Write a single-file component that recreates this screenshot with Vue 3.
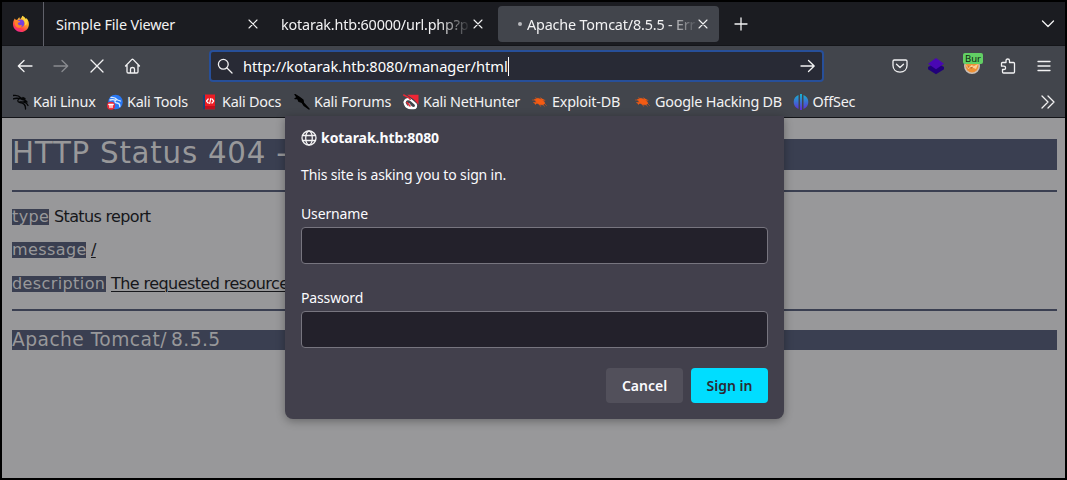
<script setup>
const bookmarks = [
  { name: 'Kali Linux', icon: 'dragon' },
  { name: 'Kali Tools', icon: 'tools' },
  { name: 'Kali Docs', icon: 'docs' },
  { name: 'Kali Forums', icon: 'forums' },
  { name: 'Kali NetHunter', icon: 'hunter' },
  { name: 'Exploit-DB', icon: 'bug' },
  { name: 'Google Hacking DB', icon: 'bug' },
  { name: 'OffSec', icon: 'offsec' }
]
</script>

<template>
  <div class="window">
    <header class="tabs">
      <div class="brand">
        <svg width="18" height="18" viewBox="0 0 18 18">
          <defs>
            <linearGradient id="fox" x1=".85" y1="0" x2=".25" y2="1">
              <stop offset="0" stop-color="#fff44f" /><stop offset=".4" stop-color="#ffa426" /><stop offset=".75" stop-color="#ff3f4b" /><stop offset="1" stop-color="#ef239b" />
            </linearGradient>
          </defs>
          <path d="M2.7 3.4 4 5.1l1.6-.5C6.1 3.2 7 2.5 7.5 2.2c0 1 .2 1.5.8 1.8C9.2 2.8 10 2 10.2.7c2 .9 3 2.1 3.5 3.5.5-.2.5-.7.4-1.200 2 1.600 3 4 2.800 6.700C16.6 14 13.2 17 9 17S1.200 13.800 1 9.500c-.1-2.400.6-4.200 1.700-6.100Z" fill="url(#fox)" />
          <circle cx="8.600" cy="8.300" r="3.700" fill="#7540df" />
          <path d="M3 5.500 7.500 6c1.300.3.8 1.300-.6 1.500-1.500.3-1.200 1.500-.4 2.200 1 .8 2.300.9 3.600.2-.7 2.500-2.500 3.400-4.600 2.700C3 11.800 2 8.500 3 5.500Z" fill="#ff8127" />
          <path d="M10.200 1c1.700 2.300 1.200 3.800 2.100 5.100 1.100 1.600 1 3.200.2 4.600 2.800-.9 3.600-4 1.500-6.700Z" fill="#ffd540" />
        </svg>
      </div>
      <div class="tab first"><span>Simple File Viewer</span><svg class="close" viewBox="0 0 10 10"><path d="m1 1 8 8M9 1 1 9" /></svg></div>
      <div class="tab second"><span class="fade">kotarak.htb:60000/url.php?p</span><svg class="close" viewBox="0 0 10 10"><path d="m1 1 8 8M9 1 1 9" /></svg></div>
      <div class="tab active"><i class="dot"></i><span class="fade">Apache Tomcat/8.5.5 - Err</span><svg class="close" viewBox="0 0 10 10"><path d="m1 1 8 8M9 1 1 9" /></svg></div>
      <svg class="plus" width="14" height="14" viewBox="0 0 14 14"><path d="M7 1v12M1 7h12" /></svg>
      <svg class="chevron" width="14" height="10" viewBox="0 0 14 10"><path d="m1.500 2 5.500 5.500L12.500 2" /></svg>
    </header>

    <div class="toolbar">
      <nav class="navigation">
        <svg viewBox="0 0 18 18"><path d="M16 9H2.500M8 3.500 2.300 9 8 14.500" /></svg>
        <svg class="disabled" viewBox="0 0 18 18"><path d="M2 9h13.500M10 3.500 15.700 9 10 14.500" /></svg>
        <svg viewBox="0 0 18 18"><path d="m3 3 12 12M15 3 3 15" /></svg>
        <svg viewBox="0 0 18 18"><path d="M1.500 9 7.700 2.600q.8-.8 1.600 0L15.500 9M3 8v6.700Q3 16 4.300 16h8.400q1.300 0 1.300-1.300V8M6.500 16v-4q0-1.500 2-1.500t2 1.500v4" /></svg>
      </nav>
      <div class="address">
        <svg width="16" height="16" viewBox="0 0 16 16"><circle cx="6.300" cy="6.300" r="4.900" /><path d="m10 10 5 5" /></svg>
        <span class="url">http://kotarak.htb:8080/manager/html</span><i class="caret"></i>
        <svg class="go" width="16" height="16" viewBox="0 0 16 16"><path d="M1 8h13M8.500 2.500 14.200 8l-5.700 5.500" /></svg>
      </div>
      <div class="actions">
        <svg viewBox="0 0 18 18"><path d="M3.300 3h11.400q1.300 0 1.300 1.300v4.200c0 4-3 6.600-7 6.600S2 12.500 2 8.500V4.300Q2 3 3.300 3ZM5.500 7.200 9 10.500l3.500-3.300" /></svg>
        <svg class="filled" viewBox="0 0 18 18"><path d="m1 10 8-4.500 8 4.500v2.200l-8 5-8-5Z" fill="#21007a" /><path d="m9 1 8 5.700-8 5.600-8-5.600Z" fill="#4907b3" /></svg>
        <div class="extension">
          <svg class="filled" viewBox="0 0 18 18"><circle cx="9" cy="9" r="8" fill="#cabfb6" /><circle cx="9" cy="9" r="6.500" fill="#ef9135" /><path d="m2.500 8 4 2 2-2 2.500 1 4-2-2 5-5-2-2.500 2Z" fill="#ffcf95" /><path d="m4 10 1.500-1 1 2 4-1.500-2 2Z" fill="#a65c29" /></svg>
          <span class="badge">Bur</span>
        </div>
        <svg viewBox="0 0 18 18"><path d="M3.500 5.500H7V3.700C7 2.600 7.600 2 8.700 2s1.800.6 1.800 1.700v1.800h4q1 0 1 1V15q0 1-1 1h-10q-1 0-1-1v-2.500h1.300c1.200 0 1.800-.6 1.800-1.600s-.6-1.700-1.800-1.700H2.500V6.500q0-1 1-1Z" /></svg>
        <svg viewBox="0 0 18 18"><path d="M3 4.500h12M3 9h12M3 13.500h12" /></svg>
      </div>
    </div>

    <nav class="bookmarks">
      <div v-for="item in bookmarks" :key="item.name" class="bookmark">
        <svg width="16" height="16" viewBox="0 0 16 16">
          <g v-if="item.icon === 'dragon'" class="dragon"><path d="M0 1.500c3-.6 6 .2 8 2.500l4 .5-2-1M0 5c2.500-1.200 4.500-.8 7-.5C4 5.500 4 8 7 8.500c3.500.4 5.800 2 5.500 6.500M7 4.500c1.500 1 2.500 1.500 5 1.500l2 2-3-.5" /><path d="M7 8c4-.5 6.500.5 8 3.500" /></g>
          <g v-else-if="item.icon === 'tools'"><circle cx="8.500" cy="8" r="7.300" fill="#2878f5" /><path d="M4 3.500c3-.3 5 .8 6.500 2.500l3 1M3 6c3-.8 4-.3 6 .2-2 1-1 2.600 1 2.800s3 1.400 2.800 3.500" fill="none" stroke="#dcecff" stroke-width="1.300" /><circle cx="4" cy="11.800" r="4" fill="#ed2938" /><path d="M1.800 10.500h4.400M3 10.500v3M5 10.500v3" stroke="#fff" /></g>
          <g v-else-if="item.icon === 'docs'"><path d="M1 1h3v14H1Z" fill="#174474" /><path d="M3 .5h10v14.800H3Z" fill="#ed1c24" /><path d="M3 12h10v3H3Z" fill="#bf101e" /><path d="M6.200 5 4.500 7l1.700 2M10 5l1.700 2L10 9M8.700 4.500l-1 5" fill="none" stroke="#fff" stroke-width="1.200" /></g>
          <g v-else-if="item.icon === 'forums'"><path d="m1 .5 4 2.500 4 3 .5 3 5.500 6-5-3.500-2-3-3-1-1.500-3L1 4.500l2-1Z" fill="#000" stroke="#000" /></g>
          <g v-else-if="item.icon === 'hunter'"><path d="M4 .8h11.500v10L11 5.500Z" fill="#ef2635" /><path d="M1.500 8.500c.5-3.500 4.500-4.500 7-2l4 3.500c1.500 2 .2 4.200-2 4.200-2.500 0-3.200-2-4.500-3.700M2 10c1 2.500 3.500 4 6 4" fill="none" stroke="#fff" stroke-width="2.300" /><path d="m.7 1 4.500 2.300 2 2M4 8.500l3 3.500" fill="none" stroke="#e92936" stroke-width="1.500" /></g>
          <g v-else-if="item.icon === 'bug'" class="bug"><path d="m2.500 5.500 3.500-1.300 3.500 1.300 2.500 2 1 1.700-2 1.600H8L5 9.200 3.500 7Z" /><path d="m3.500 3.700 3.500 2M8.500 3.700l1.500 2.600 3 0M1.500 8.500l4 0-2 2M7.500 10.500l1 1.800M12 9l2.500 2.500M.5 6h3M10.500 10.500l2 1.700" /></g>
          <g v-else><defs><linearGradient id="off" x1="0" y1="0" x2="0" y2="1"><stop offset="0" stop-color="#15b5d0" /><stop offset="1" stop-color="#612bd5" /></linearGradient></defs><path d="M5.500 1v14A7.500 7.500 0 0 1 5.500 1ZM7 0h2v16H7ZM10.500 1a7.500 7.500 0 0 1 0 14Z" fill="url(#off)" /></g>
        </svg>
        <span>{{ item.name }}</span>
      </div>
      <svg class="more" width="14" height="14" viewBox="0 0 14 14"><path d="m1 1 6 6-6 6M7 1l6 6-6 6" /></svg>
    </nav>

    <main class="page">
      <h1>HTTP Status 404 -</h1>
      <hr>
      <p><b class="type">type</b> <span class="report">Status report</span></p>
      <p class="message-row"><b class="message">message</b> <u>/</u></p>
      <p class="description"><b class="desc">description</b> <u>The requested resource</u></p>
      <hr>
      <h3>Apache Tomcat/<span class="version">8.5.5</span></h3>
      <section class="dialog">
        <div class="origin"><svg width="16" height="16" viewBox="0 0 16 16"><circle cx="8" cy="8" r="7" /><ellipse cx="8" cy="8" rx="3.300" ry="7" /><path d="M1.500 5.500h13M1.500 10.500h13" /></svg><strong>kotarak.htb:8080</strong></div>
        <div class="prompt">This site is asking you to sign in.</div>
        <label>Username<input type="text"></label>
        <label>Password<input type="password"></label>
        <div class="buttons"><button>Cancel</button><button class="primary">Sign in</button></div>
      </section>
    </main>
  </div>
</template>

<style>
html, body { margin: 0; overflow: hidden; background: #000; }
</style>

<style scoped>
* { box-sizing: border-box; }
.window { width: 1067px; height: 480px; border: 2px solid #000; background: #42454c; color: #f2f2f3; font: 14.667px/20px "Noto Sans", sans-serif; overflow: hidden; }
svg { display: block; flex-shrink: 0; fill: none; stroke: #f2f2f3; stroke-width: 1.3; stroke-linecap: round; stroke-linejoin: round; }
.tabs { height: 44px; display: flex; align-items: center; background: #1b1c21; border-bottom: 1px solid #141519; }
.brand { width: 42px; height: 44px; border-right: 1px solid #60616a; display: flex; align-items: center; padding-left: 10px; }
.brand svg, .filled { stroke: none; }
.tab { height: 36px; display: flex; align-items: center; font-size: 14.4px; letter-spacing: -.15px; white-space: nowrap; }
.tab span { position: relative; top: 1px; }
.tab .close { width: 10px; height: 10px; margin-left: auto; stroke-width: 1.1; }
.first { width: 202px; margin-left: 12px; }
.second { width: 202px; margin-left: 23px; }
.second span { width: 190px; overflow: hidden; letter-spacing: -.18px; }
.fade { -webkit-mask-image: linear-gradient(90deg, #000 calc(100% - 32px), transparent); mask-image: linear-gradient(90deg, #000 calc(100% - 32px), transparent); }
.active { width: 221px; margin-left: 15px; padding: 0 11px 0 20px; border-radius: 4px; background: #42454c; }
.dot { width: 4px; height: 4px; border-radius: 50%; background: #b9babd; margin-right: 5px; flex-shrink: 0; }
.active span { width: 171px; overflow: hidden; letter-spacing: -.18px; }
.plus { margin-left: 15px; }
.chevron { margin-left: auto; margin-right: 10px; }
.toolbar { height: 41px; display: flex; align-items: center; padding-bottom: 1px; }
.navigation { display: flex; gap: 18px; padding-left: 14px; width: 207px; }
.navigation svg, .actions svg { width: 18px; height: 18px; }
.disabled { opacity: .4; }
.address { width: 615px; height: 32px; border: 2px solid #274f99; border-radius: 4px; background: #282a35; display: flex; align-items: center; padding: 0 6px; }
.url { margin-left: 10px; font-size: 14.667px; letter-spacing: -.02px; color: #fff; white-space: nowrap; }
.caret { width: 1px; height: 19px; background: #fff; }
.go { margin-left: auto; }
.actions { display: flex; gap: 18px; padding-left: 67px; }
.extension { width: 18px; height: 18px; position: relative; }
.badge { position: absolute; left: 0; top: -4px; width: 20px; height: 11px; border-radius: 2px; background: #62cf64; color: #10250f; font-size: 9.5px; line-height: 11px; padding-left: 2px; }
.bookmarks { height: 31px; display: grid; grid-template-columns: 94px 95px 92px 109px 129px 103px 157.5px 70px 1fr; align-items: center; padding-left: 11px; border-bottom: 1px solid #141519; white-space: nowrap; }
.bookmark { display: flex; align-items: center; gap: 4px; font-size: 14.4px; letter-spacing: -.22px; }
.bookmark svg { stroke: none; }
.bookmark .dragon { fill: none; stroke: #050607; stroke-width: 1.300; }
.bug { fill: #f45b13; stroke: #f45b13; stroke-width: .5; }
.more { justify-self: end; margin-right: 10px; }
.page { position: relative; height: 360px; padding: 21px 8px 0 10px; background: #98989a; color: #16171b; font: 16px/19px "DejaVu Sans", sans-serif; }
h1, h3, b { background: #3a3f51; color: #98989a; font-weight: 400; }
h1 { margin: 0; height: 31px; font-size: 29.300px; line-height: 29px; letter-spacing: .75px; }
hr { height: 2px; margin: 20px 0 16px; border: 0; background: #3a3f51; }
p { margin: 0 0 14px; height: 19px; display: flex; gap: 5px; font-size: 16px; letter-spacing: -.65px; line-height: 18px; white-space: nowrap; }
.message-row { margin-bottom: 15px; }
b { height: 16px; margin-top: 1px; line-height: 15px; letter-spacing: .4px; }
.type { width: 37px; }
.message { width: 74px; }
.desc { width: 94px; }
u { text-underline-offset: 2px; text-decoration-thickness: 1px; }
.description { margin-bottom: 0; letter-spacing: -.57px; }
.description + hr { margin: 15px 0 19px; }
h3 { margin: 0; height: 20px; font-size: 18.667px; line-height: 20px; letter-spacing: .45px; }
.version { margin-left: 4px; }
.dialog { position: absolute; left: 283px; top: -2px; width: 499px; height: 303px; padding: 12px 16px; border-radius: 0 0 8px 8px; background: #42404c; box-shadow: 0 2px 10px #0005; color: #fbfbfe; font: 14px/20px "Noto Sans", sans-serif; letter-spacing: -.14px; }
.origin { display: flex; align-items: center; gap: 4px; height: 20px; font-size: 14px; letter-spacing: -.05px; }
strong { font-weight: 700; }
.prompt { margin: 17px 0 19px; }
label { display: block; margin-bottom: 24px; }
input { display: block; width: 467px; height: 37px; margin: 3px 0 0; border: 1px solid #77757f; border-radius: 4px; background: #23212b; outline: 0; }
.buttons { display: flex; justify-content: flex-end; gap: 8px; margin-top: -4px; }
button { width: 77px; height: 35px; border: 0; border-radius: 4px; background: #52505b; color: #fbfbfe; padding: 0; font: 600 14px/20px "Noto Sans", sans-serif; }
.primary { background: #00ddff; color: #2b2a33; }
</style>
